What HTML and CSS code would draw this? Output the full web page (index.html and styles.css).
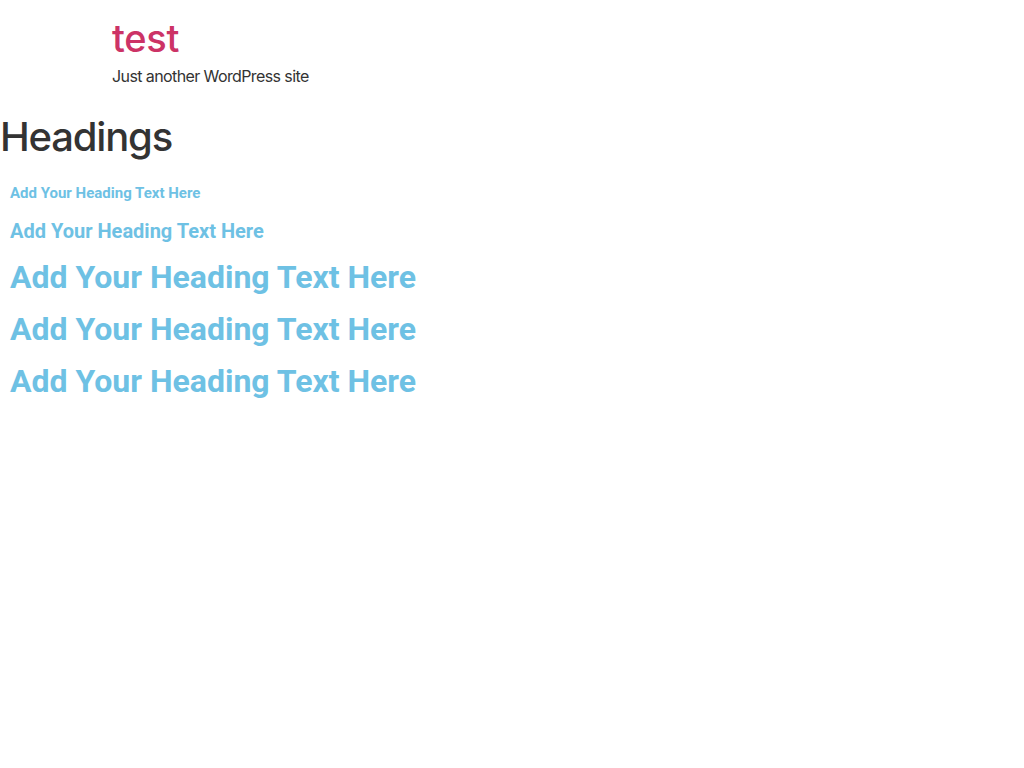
FILE: index.html
```html
<!DOCTYPE html>
<html>
<head>
<meta charset="utf-8">
<link rel="stylesheet" href="styles.css">
</head>
<body>
<header class="site-header">
  <div class="branding">
    <h1 class="site-title"><a href="#">test</a></h1>
    <p class="site-description">Just another WordPress site</p>
  </div>
</header>
<main class="site-main">
  <div class="page-header">
    <h1 class="entry-title">Headings</h1>
  </div>
  <div class="content">
    <div class="column">
      <div class="widget"><h2 class="heading size-small">Add Your Heading Text Here</h2></div>
      <div class="widget"><h2 class="heading size-medium">Add Your Heading Text Here</h2></div>
      <div class="widget"><h2 class="heading size-large">Add Your Heading Text Here</h2></div>
      <div class="widget"><h2 class="heading size-large">Add Your Heading Text Here</h2></div>
      <div class="widget"><h2 class="heading size-large">Add Your Heading Text Here</h2></div>
    </div>
  </div>
</main>
</body>
</html>
```

FILE: styles.css
```css
html, body {
  margin: 0;
  padding: 0;
  background: #fff;
}
body {
  font-family: Inter, "Liberation Sans", sans-serif;
  font-size: 16px;
  line-height: 1.5;
  color: #333;
}
.site-header {
  padding: 16px 0 25px;
}
.branding {
  max-width: 800px;
  margin: 0 auto;
}
.site-title {
  margin: 0;
  font-size: 38px;
  font-weight: 500;
  line-height: 1.2;
  letter-spacing: -0.3px;
}
.site-title a {
  color: #cc3366;
  text-decoration: none;
}
.site-description {
  margin: 2px 0 0;
  font-size: 16px;
  letter-spacing: -0.6px;
}
.page-header .entry-title {
  margin: 0 0 8px;
  font-size: 40px;
  font-weight: 500;
  line-height: 1.2;
  letter-spacing: -1.2px;
  color: #333;
}
.content {
  display: flex;
}
.column {
  padding: 17px 10px 10px;
  display: flex;
  flex-direction: column;
  gap: 20px;
}
.heading {
  margin: 0;
  font-family: Roboto, sans-serif;
  font-weight: 700;
  line-height: 1;
  color: #6ec1e4;
}
.size-small { font-size: 15px; }
.size-medium { font-size: 20px; }
.size-large { font-size: 32px; }
```
